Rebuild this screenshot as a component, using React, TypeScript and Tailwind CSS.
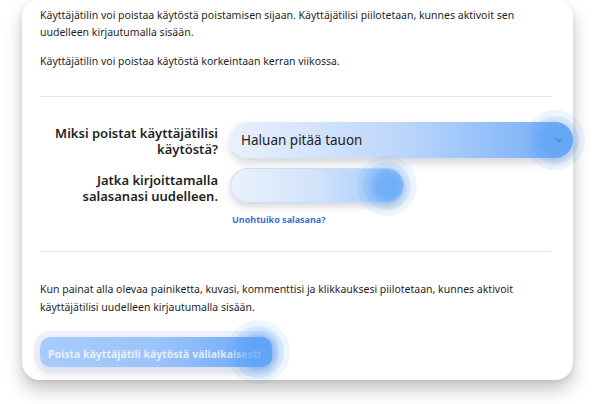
import { ChevronDown } from 'lucide-react';

const font = { fontFamily: '"Noto Sans", "Open Sans", sans-serif' };

const Glow = ({ className }: { className: string }) => (
  <div className={`pointer-events-none absolute rounded-full ${className}`}>
    <div className="absolute inset-0 rounded-full bg-[#5a9ff5]/10" />
    <div className="absolute inset-[6px] rounded-full bg-[#5a9ff5]/15" />
    <div className="absolute inset-[14px] rounded-full bg-[#5ea3f6]/60 blur-[3px]" />
  </div>
);

const App = () => {
  return (
    <div className="w-[602px] h-[404px] overflow-hidden bg-white text-[#1f1f1f]" style={font}>
      <div className="ml-[22px] w-[551px] h-[380px] rounded-b-[18px] rounded-t-[16px] bg-white shadow-[0_10px_18px_rgba(0,0,0,0.22),0_2px_6px_rgba(0,0,0,0.08)] pl-[18px] pr-[22px] pt-[7px] flex flex-col">
        <p className="text-[10.5px] leading-[17px]">
          Käyttäjätilin voi poistaa käytöstä poistamisen sijaan. Käyttäjätilisi piilotetaan, kunnes aktivoit sen uudelleen kirjautumalla sisään.
        </p>
        <p className="mt-[12px] text-[10.5px] leading-[17px]">
          Käyttäjätilin voi poistaa käytöstä korkeintaan kerran viikossa.
        </p>
        <div className="mt-[26px] h-px bg-[#e4e4e4]" />

        <div className="mt-[25px] grid grid-cols-[178px_1fr] gap-x-[12px] items-start">
          <div className="text-right text-[13px] font-semibold leading-[16px] pt-[3px]">
            Miksi poistat käyttäjätilisi käytöstä?
          </div>
          <div className="relative -mr-[22px] h-[36px] rounded-full bg-gradient-to-r from-[#e9f1fd] via-[#bcd6fa] to-[#6fabf7] shadow-[0_5px_8px_rgba(60,70,90,0.22)] flex items-center justify-between pl-[11px] pr-[8px]">
            <span className="text-[13.5px] text-[#222]">Haluan pitää tauon</span>
            <Glow className="right-[-12px] top-[-12px] w-[60px] h-[60px]" />
            <ChevronDown className="relative w-[12px] h-[12px] text-[#5d6c80]" strokeWidth={2} />
          </div>

          <div className="mt-[12px] text-right text-[13px] font-semibold leading-[16px] pt-[2px]">
            Jatka kirjoittamalla salasanasi uudelleen.
          </div>
          <div className="mt-[10px]">
            <div className="relative w-[174px] h-[35px] rounded-full border border-[#c9dcf6] bg-gradient-to-r from-[#eaf1fc] via-[#d2e3fb] to-[#9cc6fa] shadow-[0_4px_7px_rgba(60,70,90,0.2)]">
              <Glow className="right-[-14px] top-[-13px] w-[60px] h-[60px]" />
            </div>
            <a className="mt-[10px] ml-[2px] block text-[9px] font-bold text-[#3b6fd0]">Unohtuiko salasana?</a>
          </div>
        </div>

        <div className="mt-[24px] h-px bg-[#e4e4e4]" />
        <p className="mt-[28px] text-[10.5px] leading-[18px]">
          Kun painat alla olevaa painiketta, kuvasi, kommenttisi ja klikkauksesi piilotetaan, kunnes aktivoit käyttäjätilisi uudelleen kirjautumalla sisään.
        </p>
        <div className="mt-[21px]">
          <button className="relative w-[232px] h-[30px] rounded-[10px] bg-gradient-to-r from-[#a8cbfb] via-[#9cc4fa] to-[#68a7f7] shadow-[0_0_0_6px_rgba(220,230,245,0.55),0_6px_10px_rgba(60,70,90,0.2)] text-left pl-[8px]">
            <span className="relative text-[10.5px] font-bold text-white/75">Poista käyttäjätili käytöstä väliaikaisesti</span>
            <Glow className="right-[-18px] top-[-17px] w-[64px] h-[64px]" />
          </button>
        </div>
      </div>
    </div>
  );
};

export default App;
